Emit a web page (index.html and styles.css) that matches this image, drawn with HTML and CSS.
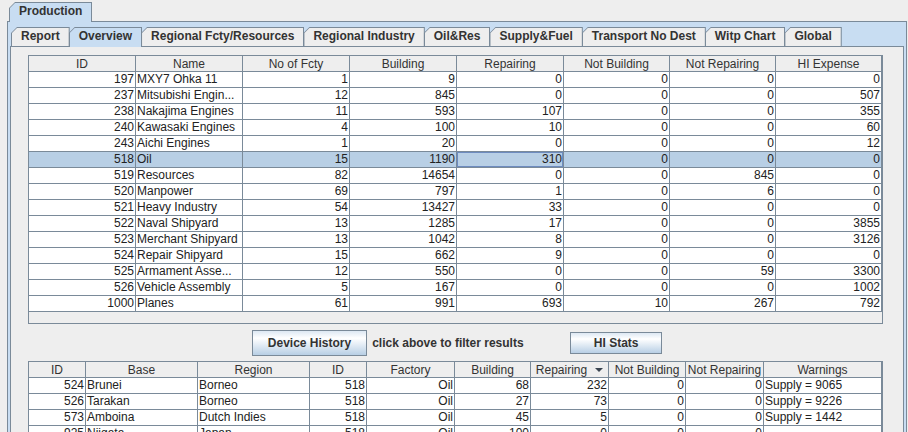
FILE: index.html
```html
<!DOCTYPE html>
<html lang="en">
<head>
    <meta charset="UTF-8">
    <title>Production</title>
    <link rel="stylesheet" href="styles.css">
</head>
<body>
    <div class="outer-tabs">
        <div class="tab selected"><span>Production</span></div>
    </div>

    <div class="outer-panel">
        <div class="tab-row">
            <div class="tab"><span>Report</span></div>
            <div class="tab selected"><span>Overview</span></div>
            <div class="tab"><span>Regional Fcty/Resources</span></div>
            <div class="tab"><span>Regional Industry</span></div>
            <div class="tab"><span>Oil&amp;Res</span></div>
            <div class="tab"><span>Supply&amp;Fuel</span></div>
            <div class="tab"><span>Transport No Dest</span></div>
            <div class="tab"><span>Witp Chart</span></div>
            <div class="tab"><span>Global</span></div>
        </div>

        <div class="inner-panel">
            <div class="scroll top-pane">
                <table class="grid">
                    <colgroup>
                        <col style="width:107px"><col style="width:107px"><col style="width:107px"><col style="width:107px">
                        <col style="width:107px"><col style="width:106px"><col style="width:106px"><col style="width:106px">
                    </colgroup>
                    <thead>
                        <tr><th>ID</th><th>Name</th><th>No of Fcty</th><th>Building</th><th>Repairing</th><th>Not Building</th><th>Not Repairing</th><th>HI Expense</th></tr>
                    </thead>
                    <tbody>
                        <tr><td class="num">197</td><td>MXY7 Ohka 11</td><td class="num">1</td><td class="num">9</td><td class="num">0</td><td class="num">0</td><td class="num">0</td><td class="num">0</td></tr>
                        <tr><td class="num">237</td><td>Mitsubishi Engin...</td><td class="num">12</td><td class="num">845</td><td class="num">0</td><td class="num">0</td><td class="num">0</td><td class="num">507</td></tr>
                        <tr><td class="num">238</td><td>Nakajima Engines</td><td class="num">11</td><td class="num">593</td><td class="num">107</td><td class="num">0</td><td class="num">0</td><td class="num">355</td></tr>
                        <tr><td class="num">240</td><td>Kawasaki Engines</td><td class="num">4</td><td class="num">100</td><td class="num">10</td><td class="num">0</td><td class="num">0</td><td class="num">60</td></tr>
                        <tr><td class="num">243</td><td>Aichi Engines</td><td class="num">1</td><td class="num">20</td><td class="num">0</td><td class="num">0</td><td class="num">0</td><td class="num">12</td></tr>
                        <tr class="picked"><td class="num">518</td><td>Oil</td><td class="num">15</td><td class="num">1190</td><td class="num focus">310</td><td class="num">0</td><td class="num">0</td><td class="num">0</td></tr>
                        <tr><td class="num">519</td><td>Resources</td><td class="num">82</td><td class="num">14654</td><td class="num">0</td><td class="num">0</td><td class="num">845</td><td class="num">0</td></tr>
                        <tr><td class="num">520</td><td>Manpower</td><td class="num">69</td><td class="num">797</td><td class="num">1</td><td class="num">0</td><td class="num">6</td><td class="num">0</td></tr>
                        <tr><td class="num">521</td><td>Heavy Industry</td><td class="num">54</td><td class="num">13427</td><td class="num">33</td><td class="num">0</td><td class="num">0</td><td class="num">0</td></tr>
                        <tr><td class="num">522</td><td>Naval Shipyard</td><td class="num">13</td><td class="num">1285</td><td class="num">17</td><td class="num">0</td><td class="num">0</td><td class="num">3855</td></tr>
                        <tr><td class="num">523</td><td>Merchant Shipyard</td><td class="num">13</td><td class="num">1042</td><td class="num">8</td><td class="num">0</td><td class="num">0</td><td class="num">3126</td></tr>
                        <tr><td class="num">524</td><td>Repair Shipyard</td><td class="num">15</td><td class="num">662</td><td class="num">9</td><td class="num">0</td><td class="num">0</td><td class="num">0</td></tr>
                        <tr><td class="num">525</td><td>Armament Asse...</td><td class="num">12</td><td class="num">550</td><td class="num">0</td><td class="num">0</td><td class="num">59</td><td class="num">3300</td></tr>
                        <tr><td class="num">526</td><td>Vehicle Assembly</td><td class="num">5</td><td class="num">167</td><td class="num">0</td><td class="num">0</td><td class="num">0</td><td class="num">1002</td></tr>
                        <tr><td class="num">1000</td><td>Planes</td><td class="num">61</td><td class="num">991</td><td class="num">693</td><td class="num">10</td><td class="num">267</td><td class="num">792</td></tr>
                    </tbody>
                </table>
            </div>

            <div class="actions">
                <button class="btn">Device History</button>
                <span class="hint">click above to filter results</span>
                <button class="btn btn-stats">HI Stats</button>
            </div>

            <div class="scroll bottom-pane">
                <table class="grid">
                    <colgroup>
                        <col style="width:57px"><col style="width:112px"><col style="width:112px"><col style="width:57px"><col style="width:88px">
                        <col style="width:76px"><col style="width:78px"><col style="width:77px"><col style="width:78px"><col style="width:118px">
                    </colgroup>
                    <thead>
                        <tr><th>ID</th><th>Base</th><th>Region</th><th>ID</th><th>Factory</th><th>Building</th><th>Repairing<i class="sort"></i></th><th>Not Building</th><th>Not Repairing</th><th>Warnings</th></tr>
                    </thead>
                    <tbody>
                        <tr><td class="num">524</td><td>Brunei</td><td>Borneo</td><td class="num">518</td><td class="num">Oil</td><td class="num">68</td><td class="num">232</td><td class="num">0</td><td class="num">0</td><td>Supply = 9065</td></tr>
                        <tr><td class="num">526</td><td>Tarakan</td><td>Borneo</td><td class="num">518</td><td class="num">Oil</td><td class="num">27</td><td class="num">73</td><td class="num">0</td><td class="num">0</td><td>Supply = 9226</td></tr>
                        <tr><td class="num">573</td><td>Amboina</td><td>Dutch Indies</td><td class="num">518</td><td class="num">Oil</td><td class="num">45</td><td class="num">5</td><td class="num">0</td><td class="num">0</td><td>Supply = 1442</td></tr>
                        <tr><td class="num">925</td><td>Niigata</td><td>Japan</td><td class="num">518</td><td class="num">Oil</td><td class="num">100</td><td class="num">0</td><td class="num">0</td><td class="num">0</td><td></td></tr>
                    </tbody>
                </table>
            </div>
        </div>
    </div>
</body>
</html>
```

FILE: styles.css
```css
*{
    margin: 0;
    padding: 0;
    box-sizing: border-box;
}

:root{
    --panel: #eeeeee;
    --line: #7a8a99;
    --blue: #c8ddf2;
    --pick: #b8cfe5;
    --text: #222222;
}

html, body{
    width: 908px;
    height: 432px;
    overflow: hidden;
}

body{
    background-color: var(--panel);
    color: var(--text);
    font-family: "Liberation Sans", Arial, sans-serif;
    font-size: 12px;
}

/* tabs with the slanted top-left corner */
.tab{
    position: relative;
    height: 19px;
    margin-left: -1px;
    padding: 1px 1px 0 1px;
    background-color: var(--line);
    clip-path: polygon(0 6px, 6px 0, 100% 0, 100% 100%, 0 100%);
}

.tab span{
    display: block;
    height: 100%;
    padding: 0 9px;
    line-height: 17px;
    font-weight: bold;
    color: #333;
    background-color: var(--panel);
    clip-path: polygon(0 5px, 5px 0, 100% 0, 100% 100%, 0 100%);
}

.tab.selected{
    height: 20px;
    margin-bottom: -1px;
    z-index: 2;
}

.tab.selected span{
    background-color: var(--blue);
}

.outer-tabs{
    display: flex;
    align-items: flex-start;
    height: 21px;
    padding: 2px 0 0 10px;
}

.outer-panel{
    width: 900px;
    height: 420px;
    margin-left: 7px;
    padding: 5px 2px 0 2px;
    border: 1px solid var(--line);
    background-color: var(--blue);
}

.tab-row{
    display: flex;
    align-items: flex-start;
    height: 19px;
    padding-left: 2px;
}

.inner-panel{
    width: 894px;
    height: 400px;
    padding: 8px 0 0 17px;
    border: 1px solid var(--line);
    background-color: var(--panel);
}

/* tables */
.scroll{
    width: 855px;
    border: 1px solid var(--line);
    background-color: var(--panel);
    overflow: hidden;
}

.top-pane{
    height: 269px;
}

.bottom-pane{
    height: 120px;
}

.grid{
    width: 853px;
    table-layout: fixed;
    border-collapse: separate;
    border-spacing: 0;
}

.grid th,
.grid td{
    height: 16px;
    padding: 0 1px;
    line-height: 15px;
    border-right: 1px solid var(--line);
    border-bottom: 1px solid var(--line);
    white-space: nowrap;
    overflow: hidden;
}

.grid th{
    padding-top: 2px;
    line-height: 13px;
    font-weight: normal;
    color: #333;
    text-align: center;
    background-color: var(--panel);
}

.grid td{
    background-color: #fff;
    text-align: left;
}

.grid td.num{
    text-align: right;
}

.grid tr.picked td{
    background-color: var(--pick);
}

.grid td.focus{
    box-shadow: inset 0 0 0 1px #6d8bbf;
}

.sort{
    display: inline-block;
    margin-left: 8px;
    vertical-align: 2px;
    border-left: 4px solid transparent;
    border-right: 4px solid transparent;
    border-top: 4px solid #3a4450;
}

/* button row */
.actions{
    display: flex;
    align-items: center;
    justify-content: center;
    gap: 5px;
    height: 37px;
    margin-left: -17px;
}

.btn{
    height: 26px;
    padding: 0 15px;
    border: 1px solid var(--line);
    background: linear-gradient(#dde8f3, #ffffff 30%, #b8cfe5);
    color: #333;
    font-family: "Liberation Sans", Arial, sans-serif;
    font-size: 12px;
    font-weight: bold;
}

.btn-stats{
    width: 92px;
    height: 22px;
}

.hint{
    width: 193px;
    font-weight: bold;
    color: #333;
}
```
